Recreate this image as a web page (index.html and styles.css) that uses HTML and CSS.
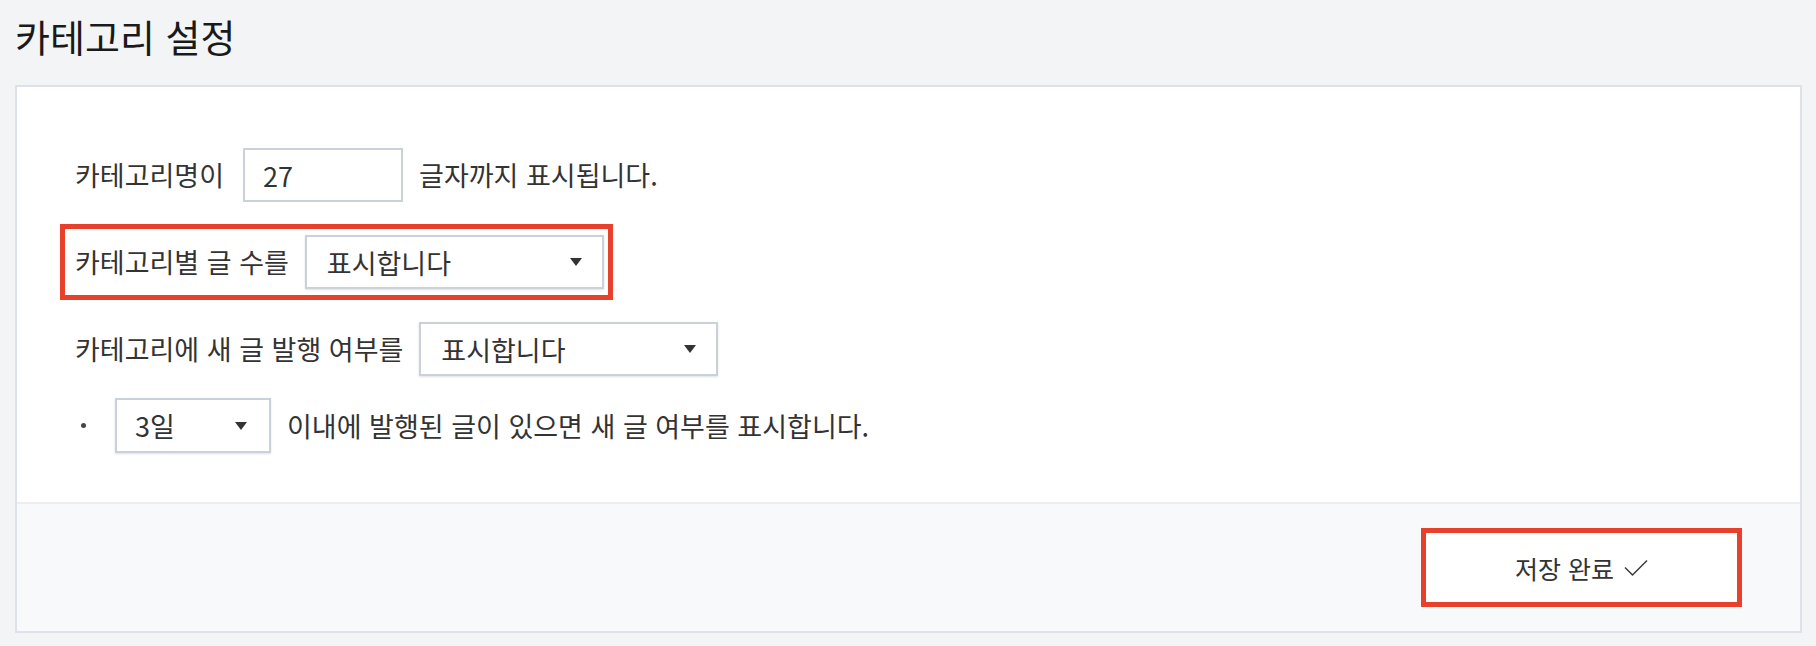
FILE: index.html
```html
<!DOCTYPE html>
<html lang="ko">
<head>
<meta charset="utf-8">
<title>카테고리 설정</title>
<link rel="stylesheet" href="styles.css">
</head>
<body>
<div class="page">
  <h1 class="title">카테고리 설정</h1>
  <div class="card">
    <div class="card-body">
      <div class="row">
        <span class="label">카테고리명이</span>
        <div class="input">27</div>
        <span class="label">글자까지 표시됩니다.</span>
      </div>
      <div class="row highlight">
        <span class="label">카테고리별 글 수를</span>
        <div class="select wide"><span>표시합니다</span><i class="caret"></i></div>
      </div>
      <div class="row">
        <span class="label">카테고리에 새 글 발행 여부를</span>
        <div class="select wide"><span>표시합니다</span><i class="caret"></i></div>
      </div>
      <div class="row last">
        <span class="bullet"></span>
        <div class="select narrow"><span>3일</span><i class="caret"></i></div>
        <span class="label">이내에 발행된 글이 있으면 새 글 여부를 표시합니다.</span>
      </div>
    </div>
    <div class="card-footer">
      <button class="save-btn" type="button">
        <span>저장 완료</span>
        <svg class="check" width="24" height="18" viewBox="0 0 24 18"><path d="M1 8.5 L8.5 16 L23 1.5" fill="none" stroke="#3a3a3a" stroke-width="1.5"/></svg>
      </button>
    </div>
  </div>
</div>
</body>
</html>
```

FILE: styles.css
```css
html, body {
  margin: 0;
  padding: 0;
  background: #f3f4f6;
}
body {
  font-family: "Noto Sans CJK KR", "Noto Sans", sans-serif;
  color: #333;
}
.page {
  padding: 0 14px 0 15px;
}
.title {
  margin: 0;
  padding: 10px 0 0 0;
  height: 85px;
  box-sizing: border-box;
  font-size: 38px;
  line-height: 52px;
  font-weight: 400;
  color: #1a1a1a;
}
.card {
  border: 2px solid #dde2ea;
  background: #fff;
}
.card-body {
  display: flex;
  flex-direction: column;
  align-items: flex-start;
  gap: 22px;
  padding: 61px 58px 49px 58px;
}
.row {
  display: flex;
  align-items: center;
  gap: 16px;
  height: 54px;
}
.row.last {
  height: 55px;
}
.label {
  font-size: 27px;
  line-height: 32px;
  color: #333;
}
.input {
  box-sizing: border-box;
  width: 160px;
  height: 54px;
  margin-left: 3px;
  border: 2px solid #cbd1da;
  padding: 0 18px;
  display: flex;
  align-items: center;
  font-size: 27px;
  color: #333;
}
.select {
  box-sizing: border-box;
  height: 54px;
  border: 2px solid #cbd1da;
  box-shadow: 0 1px 2px rgba(0, 0, 0, 0.12);
  background: #fff;
  display: flex;
  align-items: center;
  justify-content: space-between;
  font-size: 27px;
  color: #333;
}
.select.wide {
  width: 299px;
  padding: 0 20px 0 20px;
}
.select.narrow {
  width: 156px;
  height: 55px;
  padding: 0 22px 0 18px;
}
.caret {
  width: 0;
  height: 0;
  border-left: 6px solid transparent;
  border-right: 6px solid transparent;
  border-top: 8px solid #333;
}
.highlight {
  height: 76px;
  box-sizing: border-box;
  border: 5px solid #e8412b;
  padding: 0 4px 0 10px;
  margin-left: -15px;
}
.bullet {
  width: 5px;
  height: 5px;
  border-radius: 50%;
  background: #444;
  margin: 0 13px 0 6px;
}
.card-footer {
  background: #f8f9fb;
  border-top: 2px solid #eceef2;
  display: flex;
  justify-content: flex-end;
  padding: 24px 58px 24px 58px;
}
.save-btn {
  box-sizing: border-box;
  width: 321px;
  height: 79px;
  background: #fff;
  border: 5px solid #e8412b;
  display: flex;
  align-items: center;
  justify-content: center;
  gap: 10px;
  font-family: "Noto Sans CJK KR", "Noto Sans", sans-serif;
  font-size: 25px;
  color: #333;
  padding: 0;
  cursor: pointer;
}
.check {
  display: block;
}
```
